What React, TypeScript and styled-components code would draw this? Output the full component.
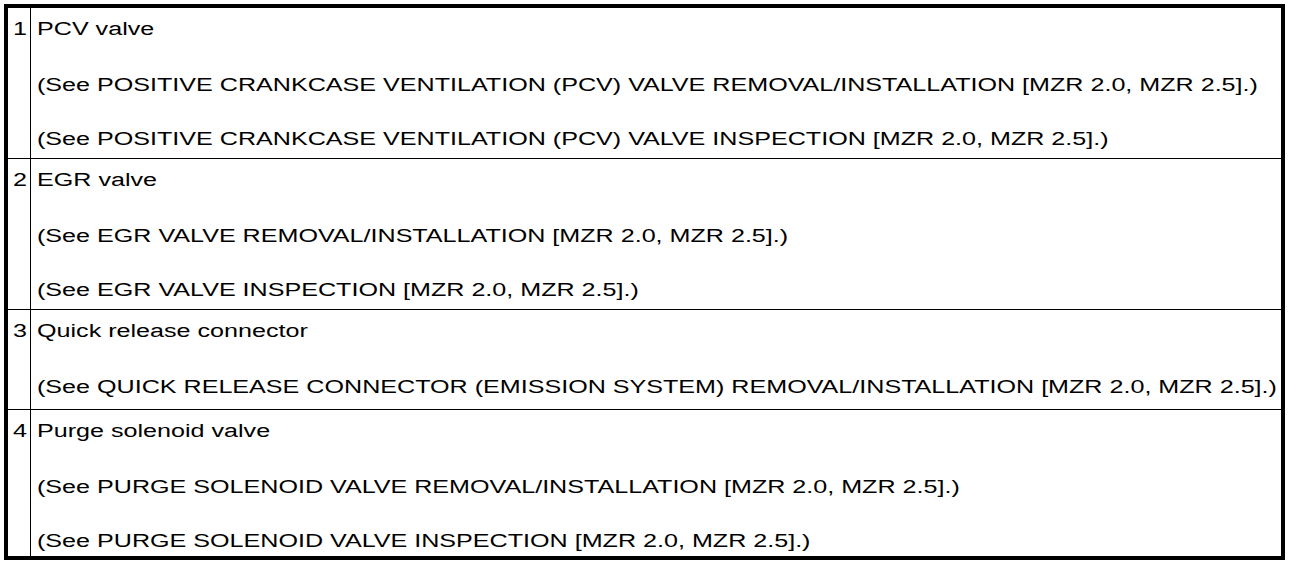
import React from "react";
import styled, {createGlobalStyle} from "styled-components";

type ItemType = {
    num: number
    title: string
    refs: string[]
}

const items: ItemType[] = [
    {
        num: 1,
        title: "PCV valve",
        refs: [
            "(See POSITIVE CRANKCASE VENTILATION (PCV) VALVE REMOVAL/INSTALLATION [MZR 2.0, MZR 2.5].)",
            "(See POSITIVE CRANKCASE VENTILATION (PCV) VALVE INSPECTION [MZR 2.0, MZR 2.5].)",
        ],
    },
    {
        num: 2,
        title: "EGR valve",
        refs: [
            "(See EGR VALVE REMOVAL/INSTALLATION [MZR 2.0, MZR 2.5].)",
            "(See EGR VALVE INSPECTION [MZR 2.0, MZR 2.5].)",
        ],
    },
    {
        num: 3,
        title: "Quick release connector",
        refs: [
            "(See QUICK RELEASE CONNECTOR (EMISSION SYSTEM) REMOVAL/INSTALLATION [MZR 2.0, MZR 2.5].)",
        ],
    },
    {
        num: 4,
        title: "Purge solenoid valve",
        refs: [
            "(See PURGE SOLENOID VALVE REMOVAL/INSTALLATION [MZR 2.0, MZR 2.5].)",
            "(See PURGE SOLENOID VALVE INSPECTION [MZR 2.0, MZR 2.5].)",
        ],
    },
]

const GlobalStyle = createGlobalStyle`
    body {
        margin: 0;
        background: #fff;
        font-family: "Liberation Sans", Arial, sans-serif;
        color: #000;
    }
`

export default function App() {
    return (
        <Page>
            <GlobalStyle/>
            <Table>
                {items.map((item, i) => {
                    const last = i === items.length - 1
                    const bottom = last ? 5 : item.refs.length < 2 ? 12 : 9
                    return (
                        <Row key={item.num}>
                            <NumCell>
                                <Wide>{item.num}</Wide>
                            </NumCell>
                            <TextCell $bottom={bottom}>
                                <Line><Wide>{item.title}</Wide></Line>
                                {item.refs.map((r) => (
                                    <RefLine key={r}><Wide>{r}</Wide></RefLine>
                                ))}
                            </TextCell>
                        </Row>
                    )
                })}
            </Table>
        </Page>
    )
}

const Page = styled.div`
    padding: 4px 0 0 4px;
    width: 1281px;
`

const Table = styled.div`
    border: 4px solid #000;
    display: flex;
    flex-direction: column;
`

const Row = styled.div`
    display: grid;
    grid-template-columns: 23px 1fr;

    & + & {
        border-top: 1px solid #000;
    }
`

// the printed manual text is set wider than it is tall
const Wide = styled.span`
    display: inline-block;
    transform: scaleX(1.395);
    transform-origin: left center;
`

const NumCell = styled.div`
    border-right: 1px solid #000;
    font-size: 18px;
    line-height: 20px;
    padding: 11px 0 0 5px;
`

const TextCell = styled.div<{ $bottom: number }>`
    padding: 11px 4px ${(p) => p.$bottom}px 6px;
    font-size: 18px;
    line-height: 20px;
    white-space: nowrap;
`

const Line = styled.div``

const RefLine = styled.div`
    margin-top: 34px;

    ${Line} + & {
        margin-top: 36px;
    }
`
